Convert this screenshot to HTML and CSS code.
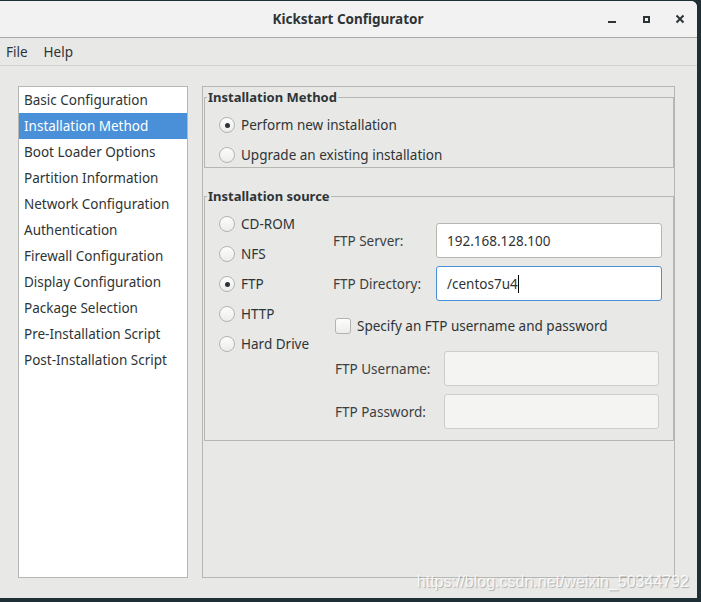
FILE: index.html
```html
<!DOCTYPE html>
<html>
<head>
<meta charset="utf-8">
<link rel="stylesheet" href="styles.css">
</head>
<body>
<div class="window">
  <div class="titlebar">
    <div class="title">Kickstart Configurator</div>
    <svg class="controls" width="90" height="20" viewBox="0 0 90 20">
      <rect x="8" y="11" width="8" height="2" fill="#2e3436"/>
      <rect x="44" y="7" width="5" height="5" fill="none" stroke="#2e3436" stroke-width="2"/>
      <path d="M76.5 5.5 L83.5 12.5 M83.5 5.5 L76.5 12.5" stroke="#2e3436" stroke-width="2"/>
    </svg>
  </div>
  <div class="menubar">
    <span class="menu-item">File</span>
    <span class="menu-item">Help</span>
  </div>
  <div class="content">
    <ul class="sidebar">
      <li>Basic Configuration</li>
      <li class="selected">Installation Method</li>
      <li>Boot Loader Options</li>
      <li>Partition Information</li>
      <li>Network Configuration</li>
      <li>Authentication</li>
      <li>Firewall Configuration</li>
      <li>Display Configuration</li>
      <li>Package Selection</li>
      <li>Pre-Installation Script</li>
      <li>Post-Installation Script</li>
    </ul>
    <div class="main">
      <fieldset class="frame method">
        <legend>Installation Method</legend>
        <div class="radio-row"><span class="radio checked"></span><span>Perform new installation</span></div>
        <div class="radio-row"><span class="radio"></span><span>Upgrade an existing installation</span></div>
      </fieldset>
      <fieldset class="frame source">
        <legend>Installation source</legend>
        <div class="source-grid">
          <div class="source-list">
            <div class="radio-row"><span class="radio"></span><span>CD-ROM</span></div>
            <div class="radio-row"><span class="radio"></span><span>NFS</span></div>
            <div class="radio-row"><span class="radio checked"></span><span>FTP</span></div>
            <div class="radio-row"><span class="radio"></span><span>HTTP</span></div>
            <div class="radio-row"><span class="radio"></span><span>Hard Drive</span></div>
          </div>
          <div class="source-form">
            <div class="field-row">
              <span class="field-label">FTP Server:</span>
              <div class="entry">192.168.128.100</div>
            </div>
            <div class="field-row">
              <span class="field-label">FTP Directory:</span>
              <div class="entry focused">/centos7u4<span class="caret"></span></div>
            </div>
            <div class="check-row"><span class="checkbox"></span><span>Specify an FTP username and password</span></div>
            <div class="auth">
              <div class="field-row">
                <span class="field-label">FTP Username:</span>
                <div class="entry disabled"></div>
              </div>
              <div class="field-row">
                <span class="field-label">FTP Password:</span>
                <div class="entry disabled"></div>
              </div>
            </div>
          </div>
        </div>
      </fieldset>
    </div>
  </div>
  <div class="watermark">https://blog.csdn.net/weixin_50344792</div>
</div>
</body>
</html>
```
FILE: styles.css
```css
* { box-sizing: border-box; }
html, body { margin: 0; padding: 0; }
body {
  width: 701px;
  height: 602px;
  background: #1f2f36;
  font-family: "Noto Sans", "DejaVu Sans", sans-serif;
  font-size: 13px;
  color: #2e3436;
  overflow: hidden;
  padding-top: 1px;
}
.window {
  position: relative;
  width: 697px;
  height: 597px;
  background: #e8e8e7;
  border-top-right-radius: 6px;
  overflow: hidden;
}
.titlebar {
  height: 37px;
  background: #f2f2f2;
  border-bottom: 1px solid #a9a9a7;
  display: flex;
  align-items: center;
  justify-content: center;
  position: relative;
}
.title {
  font-weight: bold;
  font-size: 13.5px;
  color: #2e3436;
  margin-left: -1px;
}
.controls {
  position: absolute;
  left: 600px;
  top: 9px;
  display: block;
}
.menubar {
  height: 28px;
  border-bottom: 1px solid #d3d3d1;
  display: flex;
  align-items: center;
  padding-left: 6px;
  gap: 16px;
}
.menu-item { font-size: 13.5px; }
.content {
  display: flex;
  padding: 20px 0 0 18px;
  gap: 14px;
}
.sidebar {
  list-style: none;
  margin: 0;
  padding: 0;
  width: 170px;
  height: 492px;
  background: #fff;
  border: 1px solid #b6b6b3;
}
.sidebar li {
  height: 26px;
  line-height: 26px;
  padding-left: 5px;
  font-size: 13.5px;
  white-space: nowrap;
}
.sidebar li.selected {
  background: #4a90d9;
  color: #fff;
}
.main {
  width: 473px;
  height: 492px;
  border: 1px solid #b6b6b3;
  padding: 0 0 0 1px;
}
.frame {
  margin: 0;
  border: 1px solid #b6b6b3;
  padding: 8px 0 0 15px;
  min-width: 0;
}
.frame legend {
  padding: 0 1px;
  margin-left: -13px;
  font-weight: bold;
  font-size: 13px;
  line-height: 16px;
}
.method { margin-top: 2px; }
.source { margin-top: 20px; padding-bottom: 11px; }
.radio-row {
  height: 24px;
  display: flex;
  align-items: center;
  gap: 6px;
  font-size: 13.5px;
}
.method .radio-row + .radio-row { margin-top: 6px; }
.source-list .radio-row + .radio-row { margin-top: 6px; }
.radio {
  width: 16px;
  height: 16px;
  margin-left: -1px;
  border-radius: 50%;
  border: 1px solid #b3b3b0;
  background: linear-gradient(#fdfdfd, #ececeb);
  position: relative;
  flex: none;
}
.radio.checked::after {
  content: "";
  position: absolute;
  left: 4.5px;
  top: 4.5px;
  width: 5px;
  height: 5px;
  border-radius: 50%;
  background: #2e3436;
}
.source-grid {
  display: flex;
}
.source-list {
  width: 113px;
}
.source-form {
  margin-top: 11px;
  width: 329px;
}
.field-row {
  display: flex;
  align-items: center;
  height: 35px;
}
.field-row + .field-row { margin-top: 8px; }
.field-label {
  width: 103px;
  font-size: 13.5px;
  color: #3b3f40;
}
.entry {
  width: 226px;
  height: 35px;
  background: #fff;
  border: 1px solid #b6b6b3;
  border-radius: 3px;
  padding-left: 10px;
  display: flex;
  align-items: center;
  font-size: 13.5px;
}
.entry.focused { border-color: #4a90d9; }
.caret {
  display: inline-block;
  width: 1px;
  height: 18px;
  background: #000;
}
.entry.disabled {
  width: 215px;
  background: #f4f4f2;
  border-color: #cdcdca;
}
.check-row {
  height: 50px;
  display: flex;
  align-items: center;
  gap: 6px;
  padding-left: 2px;
  font-size: 13.5px;
}
.checkbox {
  width: 16px;
  height: 16px;
  border: 1px solid #b3b3b0;
  border-radius: 3px;
  background: linear-gradient(#fdfdfd, #ececeb);
  flex: none;
}
.auth {
  padding-left: 2px;
}
.auth .field-label { width: 109px; }
.watermark {
  position: absolute;
  right: 8px;
  bottom: 7px;
  font-family: "Liberation Sans", Arial, sans-serif;
  font-size: 16px;
  color: rgba(255,255,255,0.85);
  text-shadow: 1px 1px 1px rgba(0,0,0,0.25);
}
```
